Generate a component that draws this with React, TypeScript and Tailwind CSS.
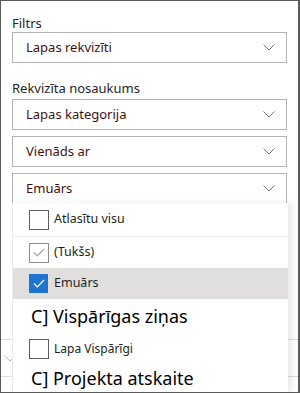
import React from 'react';

const font = { fontFamily: '"Noto Sans", "Liberation Sans", sans-serif' };

function Chevron({ className = '' }: { className?: string }) {
  return (
    <svg width="12" height="7" viewBox="0 0 12 7" className={className}>
      <path d="M0.5 0.5 L6 6 L11.5 0.5" fill="none" stroke="currentColor" strokeWidth="1" />
    </svg>
  );
}

function Dropdown({ value }: { value: string }) {
  return (
    <div className="flex h-[31px] items-center justify-between border border-[#b5b3b1] bg-white pl-[13px] pr-[11px]">
      <span className="text-[13px] text-[#3f1111]">{value}</span>
      <Chevron className="text-[#7d7b79]" />
    </div>
  );
}

function Check({ state }: { state: 'off' | 'dim' | 'on' }) {
  if (state === 'on') {
    return (
      <div className="flex h-[19px] w-[19px] items-center justify-center bg-[#1f74d0]">
        <svg width="12" height="9" viewBox="0 0 12 9">
          <path d="M1 4.5 L4.3 7.8 L11 1" fill="none" stroke="#fff" strokeWidth="1.2" />
        </svg>
      </div>
    );
  }
  return (
    <div
      className={`flex h-[20px] w-[20px] items-center justify-center border bg-white ${
        state === 'dim' ? 'border-[#8f8d8b]' : 'border-[#5f5e5c]'
      }`}
    >
      {state === 'dim' && (
        <svg width="12" height="9" viewBox="0 0 12 9">
          <path d="M1 4.5 L4.3 7.8 L11 1" fill="none" stroke="#a8a6a4" strokeWidth="1.2" />
        </svg>
      )}
    </div>
  );
}

export default function App() {
  return (
    <div
      className="relative h-[393px] w-[300px] overflow-hidden border border-r-2 border-[#5a5a5a] bg-white text-[#252423]"
      style={font}
    >
      <div className="px-[11px] pt-[13px]">
        <div className="h-[18px] text-[13px] leading-[18px]">Filtrs</div>
        <Dropdown value="Lapas rekvizīti" />
        <div className="mt-[16px] mb-[2px] h-[18px] text-[13px] leading-[18px]">Rekvizīta nosaukums</div>
        <div className="flex flex-col gap-[6px]">
          <Dropdown value="Lapas kategorija" />
          <Dropdown value="Vienāds ar" />
          <Dropdown value="Emuārs" />
        </div>
      </div>

      <div className="h-[136px] border-b border-[#e1dfdd]" />
      <div className="flex h-[37px] items-center border-b border-[#e1dfdd] pl-[3px]">
        <Chevron className="text-[#b9b7b5]" />
      </div>

      <div className="absolute left-[11px] top-[202px] bottom-0 w-[276px] border-l border-[#edebe9] bg-white shadow-[5px_0_6px_rgba(0,0,0,0.08)]">
        <div className="flex h-[34px] items-center gap-[5px] border-b border-[#edebe9] pl-[16px]">
          <Check state="off" />
          <span className="text-[12.5px] text-[#201f1e]">Atlasītu visu</span>
        </div>
        <div className="flex h-[31px] items-center gap-[5px] pl-[16px]">
          <Check state="dim" />
          <span className="text-[12.5px] text-[#201f1e]">(Tukšs)</span>
        </div>
        <div className="flex h-[31px] items-center gap-[6px] bg-[#e1dfdd] pl-[16px]">
          <Check state="on" />
          <span className="text-[12.5px] text-[#201f1e]">Emuārs</span>
        </div>
        <div className="flex h-[35px] items-center pl-[18px] text-[18px] text-black">C] Vispārīgas ziņas</div>
        <div className="flex h-[30px] items-center gap-[5px] pl-[16px]">
          <Check state="off" />
          <span className="text-[12px] text-[#201f1e]">Lapa Vispārīgi</span>
        </div>
        <div className="flex h-[28px] items-center pl-[18px] text-[18px] text-black">C] Projekta atskaite</div>
      </div>
    </div>
  );
}
